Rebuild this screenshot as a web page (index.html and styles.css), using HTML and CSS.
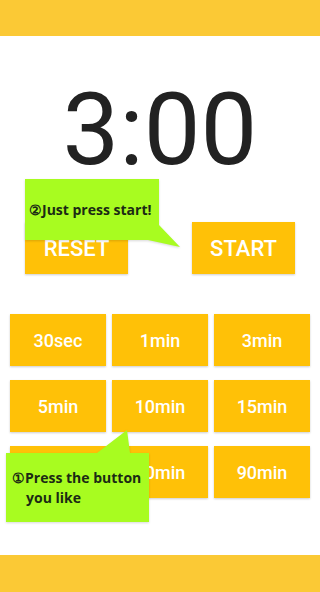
FILE: index.html
```html
<!DOCTYPE html>
<html lang="en">
<head>
  <meta charset="UTF-8" />
  <meta name="viewport" content="width=device-width, initial-scale=1.0"/>
  <title>Timer</title>
  <link rel="stylesheet" href="styles.css">
</head>
<body>
  <div class="page">
    <header class="top-bar"></header>

    <main class="main">
      <div class="timer">3:00</div>

      <div class="controls">
        <button class="btn btn-big">RESET</button>
        <button class="btn btn-big">START</button>
      </div>

      <!-- Preset buttons -->
      <div class="presets">
        <button class="btn">30sec</button>
        <button class="btn">1min</button>
        <button class="btn">3min</button>
        <button class="btn">5min</button>
        <button class="btn">10min</button>
        <button class="btn">15min</button>
        <button class="btn">30min</button>
        <button class="btn">60min</button>
        <button class="btn">90min</button>
      </div>
    </main>

    <footer class="bottom-bar"></footer>

    <!-- Tutorial bubbles -->
    <div class="bubble bubble-start">
      <svg class="bubble-shape" width="134" height="61">
        <path d="M0 0 H134 V46 L155 68 L123 61 H0 Z" />
      </svg>
      <p>②Just press start!</p>
    </div>

    <div class="bubble bubble-preset">
      <svg class="bubble-shape" width="143" height="69">
        <path d="M0 0 H91 L121 -23 L124 0 H143 V69 H0 Z" />
      </svg>
      <p>①Press the button you like</p>
    </div>
  </div>
</body>
</html>
```

FILE: styles.css
```css
* {
  box-sizing: border-box;
}
body {
  margin: 0;
  background-color: #fff;
  font-family: Roboto, "Noto Sans", sans-serif;
}
.page {
  position: relative;
  height: 592px;
  display: flex;
  flex-direction: column;
  overflow: hidden;
}
.top-bar {
  height: 36px;
  background-color: #fbc935;
  flex: none;
}
.bottom-bar {
  height: 37px;
  background-color: #fbc935;
  flex: none;
}
.main {
  flex: 1;
}

/* Timer */
.timer {
  margin-top: 44px;
  font-size: 101px;
  line-height: 100px;
  text-align: center;
  color: #222;
}

/* Buttons */
.btn {
  border: none;
  background-color: #ffc107;
  color: #fff;
  font-family: Roboto, sans-serif;
  font-weight: 500;
  font-size: 18px;
  height: 52px;
  padding: 0;
  box-shadow: 0 1px 2px rgba(0, 0, 0, 0.2);
}
.controls {
  margin-top: 42px;
  display: flex;
  justify-content: center;
  gap: 64px;
}
.btn-big {
  width: 103px;
  font-size: 22px;
}
.presets {
  margin: 40px 10px 0;
  display: grid;
  grid-template-columns: repeat(3, 1fr);
  column-gap: 6px;
  row-gap: 14px;
}

/* Bubbles */
.bubble {
  position: absolute;
  display: flex;
  align-items: center;
}
.bubble-shape {
  position: absolute;
  left: 0;
  top: 0;
  overflow: visible;
  filter: drop-shadow(0 1px 1px rgba(0, 0, 0, 0.15));
}
.bubble-shape path {
  fill: #a8fc20;
}
.bubble p {
  position: relative;
  margin: 0;
  font-family: "Open Sans", "Noto Sans", sans-serif;
  font-weight: 700;
  color: #1b2a14;
}
.bubble-start {
  left: 25px;
  top: 179px;
  width: 134px;
  height: 61px;
}
.bubble-start p {
  padding-left: 4px;
  font-size: 14px;
  white-space: nowrap;
}
.bubble-preset {
  left: 6px;
  top: 453px;
  width: 143px;
  height: 69px;
}
.bubble-preset p {
  padding-left: 20px;
  text-indent: -14px;
  font-size: 14px;
  line-height: 20px;
}
```
